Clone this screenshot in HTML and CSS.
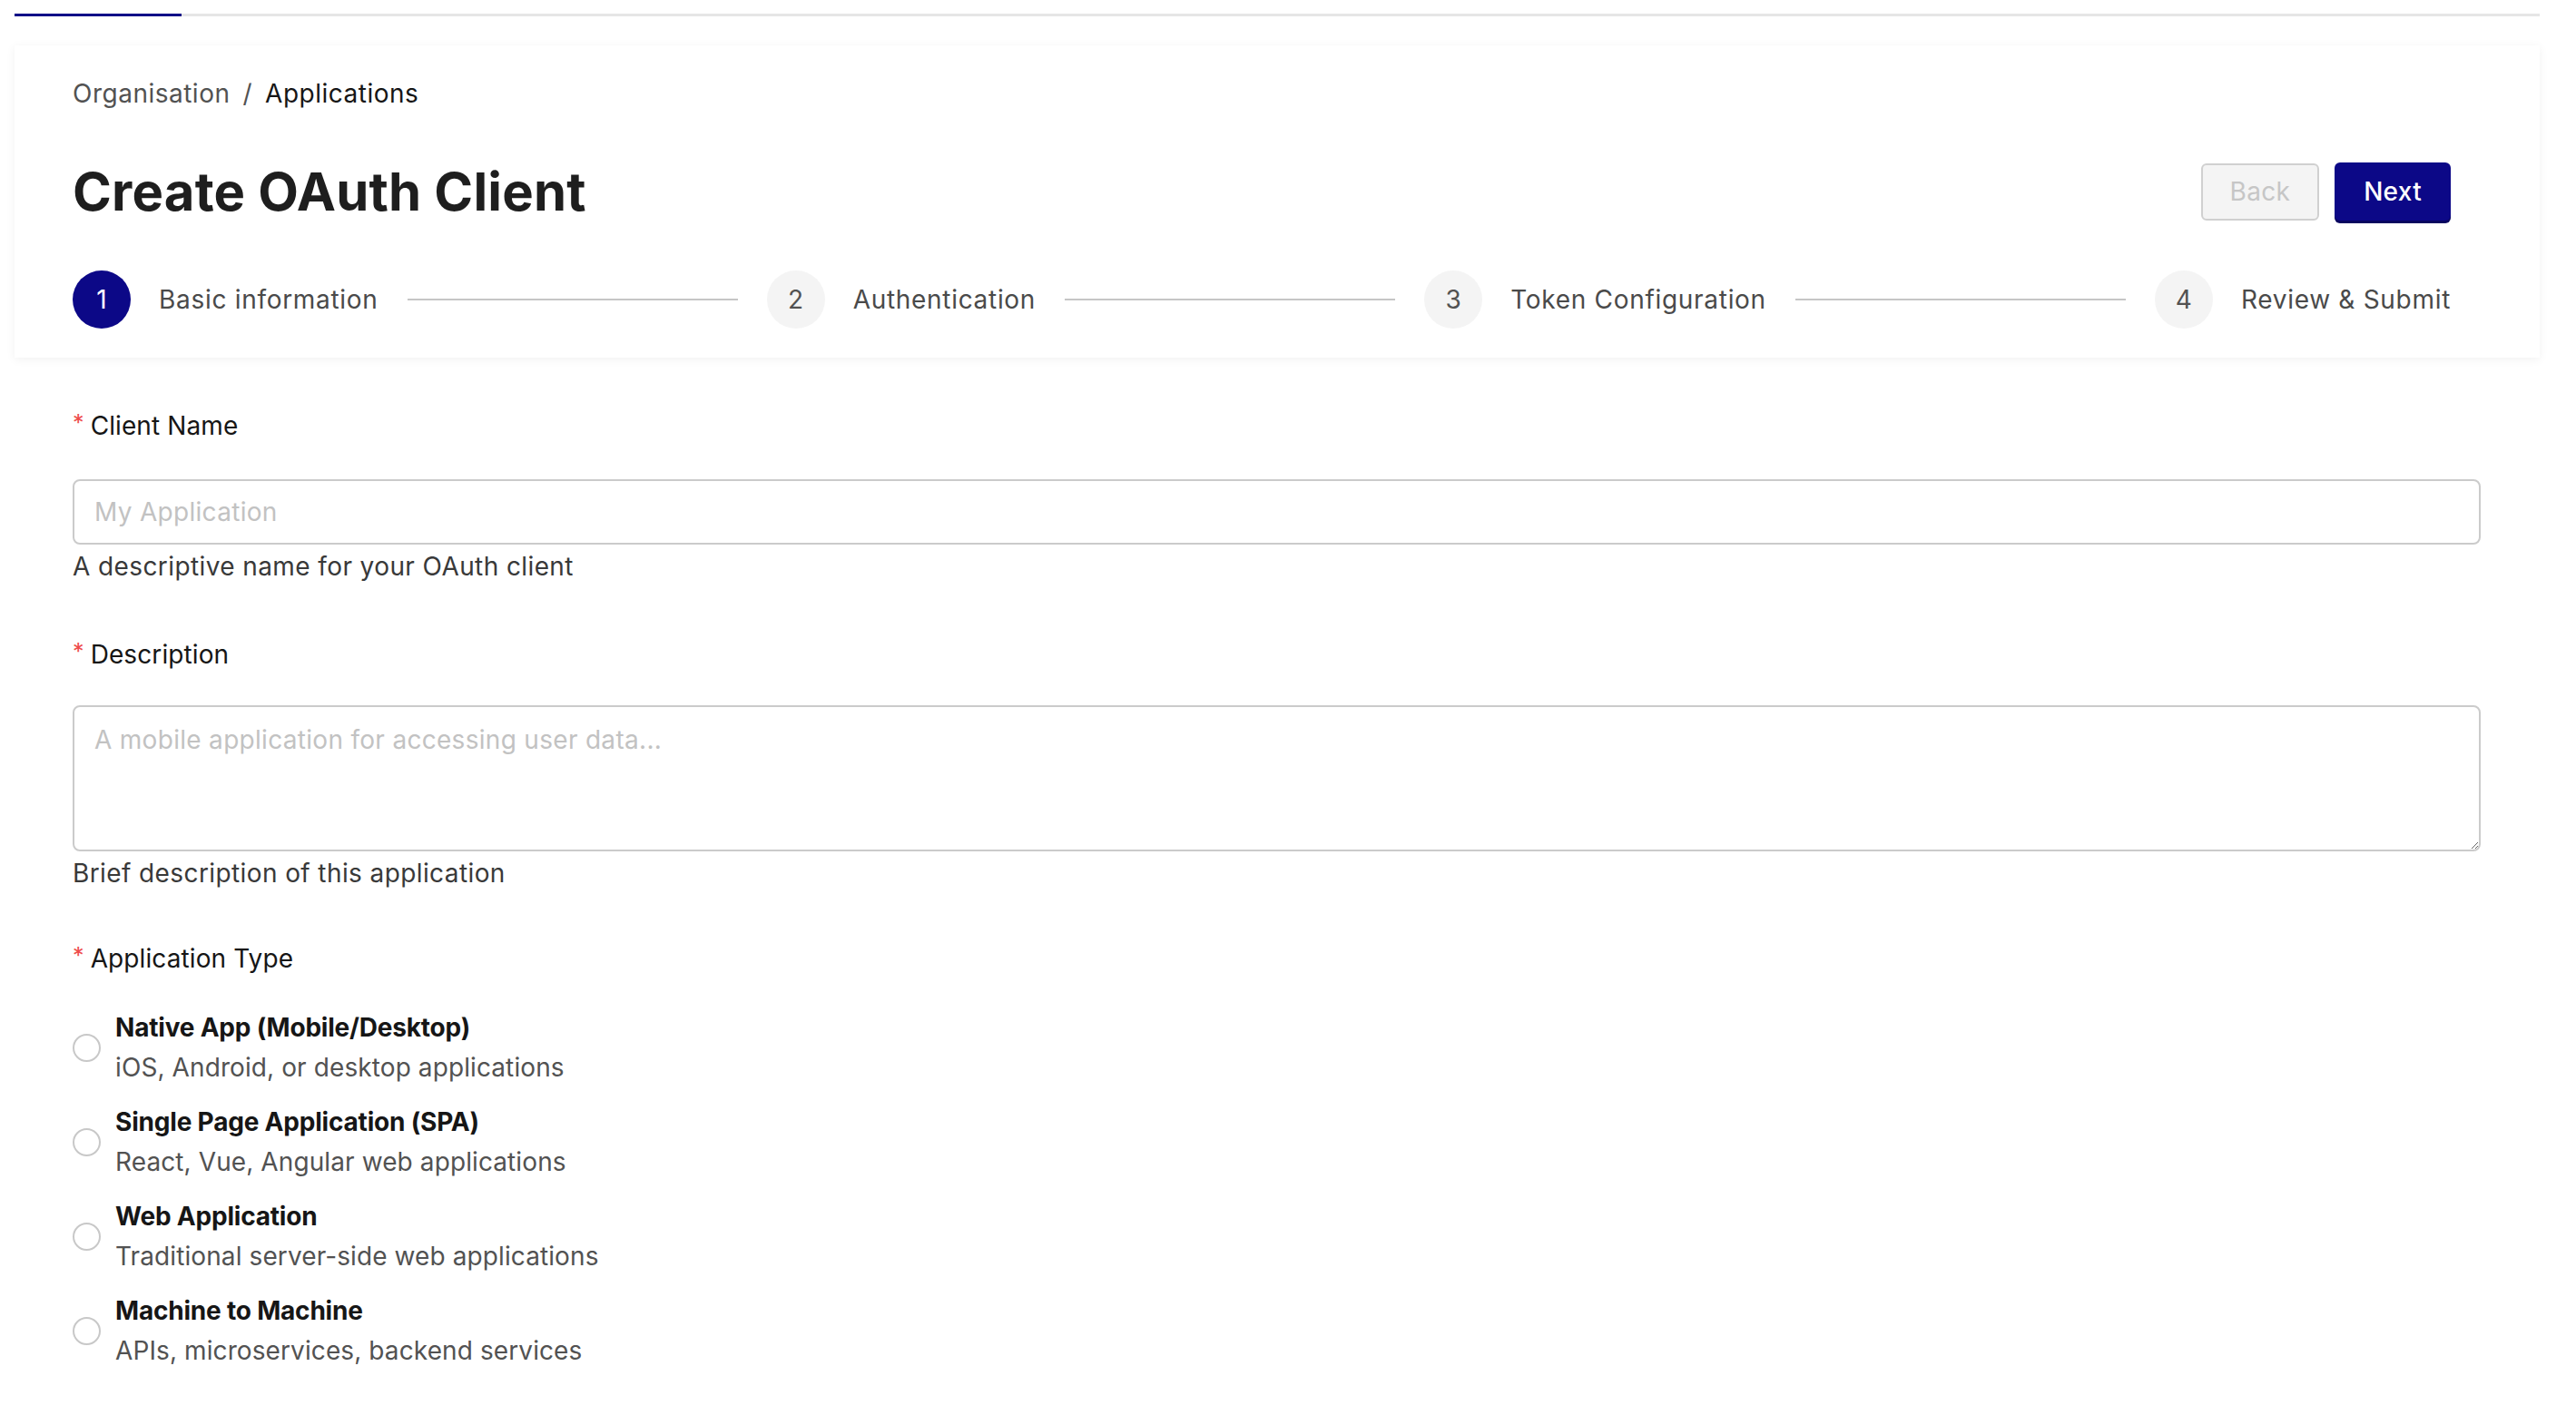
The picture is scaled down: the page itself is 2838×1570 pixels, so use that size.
FILE: index.html
```html
<!DOCTYPE html>
<html lang="en">
<head>
<meta charset="utf-8">
<title>Create OAuth Client</title>
<link rel="stylesheet" href="styles.css">
</head>
<body>
<div class="page">
  <div class="progress"><div class="progress-fill" style="width:6.6%"></div></div>

  <section class="card">
    <nav class="breadcrumb">
      <span class="crumb">Organisation</span>
      <span class="sep">/</span>
      <span class="crumb current">Applications</span>
    </nav>

    <div class="header-row">
      <h1 class="title">Create OAuth Client</h1>
      <div class="actions">
        <button class="btn btn-back" type="button" disabled>Back</button>
        <button class="btn btn-next" type="button">Next</button>
      </div>
    </div>

    <ol class="stepper">
      <li class="step active"><span class="step-num">1</span><span class="step-label">Basic information</span></li>
      <li class="step-line"></li>
      <li class="step"><span class="step-num">2</span><span class="step-label">Authentication</span></li>
      <li class="step-line"></li>
      <li class="step"><span class="step-num">3</span><span class="step-label">Token Configuration</span></li>
      <li class="step-line"></li>
      <li class="step"><span class="step-num">4</span><span class="step-label">Review &amp; Submit</span></li>
    </ol>
  </section>

  <form class="form">
    <div class="field">
      <label class="field-label" for="client-name"><span class="req">*</span>Client Name</label>
      <input id="client-name" class="text-input" type="text" placeholder="My Application">
      <p class="help">A descriptive name for your OAuth client</p>
    </div>

    <div class="field">
      <label class="field-label label-tight" for="description"><span class="req">*</span>Description</label>
      <textarea id="description" class="text-area" placeholder="A mobile application for accessing user data..."></textarea>
      <p class="help">Brief description of this application</p>
    </div>

    <div class="field field-options">
      <div class="field-label label-options"><span class="req">*</span>Application Type</div>
      <div class="options">
        <label class="option">
          <input class="radio" type="radio" name="apptype">
          <span class="option-text">
            <span class="option-title">Native App (Mobile/Desktop)</span>
            <span class="option-sub">iOS, Android, or desktop applications</span>
          </span>
        </label>
        <label class="option">
          <input class="radio" type="radio" name="apptype">
          <span class="option-text">
            <span class="option-title">Single Page Application (SPA)</span>
            <span class="option-sub">React, Vue, Angular web applications</span>
          </span>
        </label>
        <label class="option">
          <input class="radio" type="radio" name="apptype">
          <span class="option-text">
            <span class="option-title">Web Application</span>
            <span class="option-sub">Traditional server-side web applications</span>
          </span>
        </label>
        <label class="option">
          <input class="radio" type="radio" name="apptype">
          <span class="option-text">
            <span class="option-title">Machine to Machine</span>
            <span class="option-sub">APIs, microservices, backend services</span>
          </span>
        </label>
      </div>
    </div>
  </form>
</div>
</body>
</html>
```

FILE: styles.css
```css
* {
  box-sizing: border-box;
}

html, body {
  margin: 0;
  padding: 0;
  background: #ffffff;
}

body {
  font-family: Inter, "Liberation Sans", sans-serif;
  color: #161616;
  font-size: 28px;
  letter-spacing: 0.3px;
}

.page {
  padding: 15px 40px 0 16px;
}

/* top progress */
.progress {
  height: 3px;
  background: #e6e6e6;
}

.progress-fill {
  height: 100%;
  background: #0c0887;
}

/* header card */
.card {
  margin-top: 32px;
  padding: 32px 98px 32px 64px;
  background: #ffffff;
  box-shadow: 0 2px 10px rgba(0, 0, 0, 0.06);
}

.breadcrumb {
  display: flex;
  align-items: center;
  font-size: 28px;
  line-height: 42px;
  color: #525252;
  letter-spacing: 0.5px;
}

.sep {
  margin: 0 14px;
}

.crumb.current {
  color: #161616;
}

.header-row {
  display: flex;
  align-items: center;
  justify-content: space-between;
  margin-top: 52px;
}

.title {
  margin: 0;
  font-size: 58px;
  line-height: 70px;
  font-weight: 700;
  letter-spacing: 0.2px;
  color: #1e1e1e;
}

.actions {
  display: flex;
  align-items: center;
  gap: 17px;
}

.btn {
  font-family: inherit;
  font-size: 28px;
  letter-spacing: 0.3px;
  height: 64px;
  padding: 0 32px;
  border-radius: 6px;
  cursor: pointer;
}

.btn-back {
  background: #f4f4f4;
  border: 2px solid #d0d0d0;
  color: #c6c6c6;
  height: 63px;
  padding: 0 30px;
}

.btn-next {
  background: #0c0887;
  border: none;
  color: #ffffff;
  font-weight: 500;
  box-shadow: 0 3px 0 #08055f;
}

/* stepper */
.stepper {
  display: flex;
  align-items: center;
  list-style: none;
  margin: 52px 0 0 0;
  padding: 0;
}

.step {
  display: flex;
  align-items: center;
  gap: 31px;
}

.step-num {
  width: 64px;
  height: 64px;
  border-radius: 50%;
  background: #f4f4f4;
  color: #525252;
  display: flex;
  align-items: center;
  justify-content: center;
  font-size: 28px;
}

.step.active .step-num {
  background: #0c0887;
  color: #ffffff;
}

.step-label {
  font-size: 28px;
  line-height: 40px;
  color: #4a4a4a;
  letter-spacing: 0.7px;
  white-space: nowrap;
}

.step-line {
  flex: 1;
  height: 2px;
  background: #c6c6c6;
  margin: 0 32px;
}

/* form */
.form {
  padding: 52px 65px 40px 64px;
}

.field + .field {
  margin-top: 54px;
}

.field + .field.field-options {
  margin-top: 51px;
}

.field-label {
  display: block;
  font-size: 28px;
  line-height: 40px;
  color: #161616;
  letter-spacing: 0.1px;
  margin-bottom: 39px;
}

.field-label.label-tight {
  margin-bottom: 36px;
}

.field-label.label-options {
  margin-bottom: 34px;
}

.req {
  color: #ee4b4b;
  font-size: 25px;
  vertical-align: 4px;
  margin-right: 7px;
}

.text-input,
.text-area {
  display: block;
  width: 100%;
  font-family: inherit;
  font-size: 28px;
  letter-spacing: 0.3px;
  color: #161616;
  border: 2px solid #cbcbcb;
  border-radius: 8px;
  background: #ffffff;
  outline: none;
}

.text-input {
  height: 72px;
  padding: 0 22px;
}

.text-area {
  height: 161px;
  padding: 16px 22px;
  line-height: 40px;
  resize: vertical;
}

.text-input::placeholder,
.text-area::placeholder {
  color: #c2c2c2;
}

.help {
  margin: 4px 0 0 0;
  font-size: 28px;
  line-height: 40px;
  color: #393939;
  letter-spacing: 0.4px;
}

.options {
  display: flex;
  flex-direction: column;
  gap: 16px;
}

.option {
  display: flex;
  align-items: center;
  gap: 16px;
  cursor: pointer;
}

.radio {
  appearance: none;
  -webkit-appearance: none;
  margin: 0;
  width: 31px;
  height: 31px;
  border: 2px solid #c8c8c8;
  border-radius: 50%;
  background: #ffffff;
  flex: none;
}

.option-text {
  display: flex;
  flex-direction: column;
}

.option-title {
  font-weight: 700;
  font-size: 28px;
  line-height: 44px;
  letter-spacing: -0.2px;
  color: #161616;
}

.option-sub {
  font-size: 28px;
  line-height: 44px;
  letter-spacing: 0.1px;
  color: #525252;
}
```
